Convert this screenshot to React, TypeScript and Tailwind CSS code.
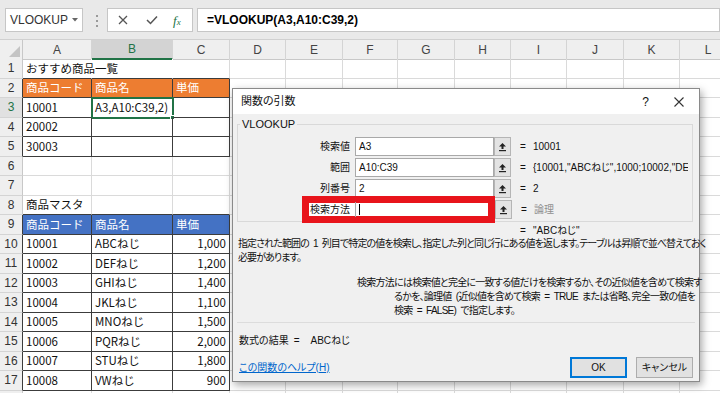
import clsx from 'clsx';

const COLS = 'grid grid-cols-[23px_69px_81px_57px_56px_57px_55px_57px_56px_56px_57px_56px_57px]';
const LETTERS = ['A', 'B', 'C', 'D', 'E', 'F', 'G', 'H', 'I', 'J', 'K', 'L'];
const JP = "font-['Noto_Sans_CJK_JP','Noto_Sans',sans-serif]";
const SP = '\u2002';

const data: Record<number, string[]> = {
  1: ['おすすめ商品一覧'],
  2: ['商品コード', '商品名', '単価'],
  3: ['10001', 'A3,A10:C39,2)', ''],
  4: ['20002'],
  5: ['30003'],
  8: ['商品マスタ'],
  9: ['商品コード', '商品名', '単価'],
  10: ['10001', 'ABCねじ', '1,000'],
  11: ['10002', 'DEFねじ', '1,200'],
  12: ['10003', 'GHIねじ', '1,400'],
  13: ['10004', 'JKLねじ', '1,100'],
  14: ['10005', 'MNOねじ', '1,500'],
  15: ['10006', 'PQRねじ', '2,000'],
  16: ['10007', 'STUねじ', '1,800'],
  17: ['10008', 'VWねじ', '900'],
};

function inTable(r: number, c: number) {
  return c >= 0 && c <= 2 && ((r >= 2 && r <= 5) || (r >= 9 && r <= 17));
}

function PickIcon() {
  return (
    <svg width="9" height="10" viewBox="0 0 9 10">
      <path d="M4.5 1 L8 4.5 H5.5 V7 H3.5 V4.5 H1 Z" fill="#222" />
      <rect x="1" y="8" width="7" height="1.2" fill="#222" />
    </svg>
  );
}

function PickButton() {
  return (
    <div className="w-[17px] h-[19px] bg-[#e3e3e3] border border-[#b5b5b5] flex items-center justify-center">
      <PickIcon />
    </div>
  );
}

function ArgRow({ label, input, children }: { label: string; input: string; children: React.ReactNode }) {
  return (
    <div className="flex items-center h-[19px]">
      <div className="w-[113px] text-right pr-[1px]">{label}</div>
      <div className="ml-[4px] w-[139px] h-[19px] bg-white border border-[#a9a9a9] flex items-center pl-[3px]">{input}</div>
      <PickButton />
      <span className="ml-[9px] w-[13px]">=</span>
      {children}
    </div>
  );
}

export default function App() {
  const rowNums = Array.from({ length: 18 }, (_, i) => i + 1);

  return (
    <div className={clsx('relative w-[720px] h-[393px] overflow-hidden bg-white', JP)}>
      {/* formula bar */}
      <div className="h-[40px] bg-[#e9e9e9] flex items-start pt-[8px] pl-[5px] border-b border-[#d0d0d0]">
        <div className="w-[78px] h-[24px] bg-white border border-[#c6c6c6] flex items-center pl-[4px] font-['Liberation_Sans',sans-serif] text-[12px] text-[#333]">
          VLOOKUP
          <svg className="ml-auto mr-[4px]" width="6" height="4" viewBox="0 0 6 4">
            <path d="M0 0 H6 L3 3.5 Z" fill="#666" />
          </svg>
        </div>
        <div className="ml-[13px] mt-[7px] flex flex-col gap-[3px]">
          <span className="w-[2px] h-[2px] bg-[#9a9a9a]" />
          <span className="w-[2px] h-[2px] bg-[#9a9a9a]" />
          <span className="w-[2px] h-[2px] bg-[#9a9a9a]" />
        </div>
        <div className="ml-[9px] w-[86px] h-[24px] bg-white border border-[#c6c6c6] flex items-center">
          <svg className="ml-[10px]" width="10" height="10" viewBox="0 0 10 10">
            <path d="M1 1 L9 9 M9 1 L1 9" stroke="#555" strokeWidth="1.3" />
          </svg>
          <svg className="ml-[18px]" width="12" height="10" viewBox="0 0 12 10">
            <path d="M1 5 L4.5 8.5 L11 1.5" stroke="#555" strokeWidth="1.5" fill="none" />
          </svg>
          <span className="ml-[15px] italic font-['Liberation_Serif',serif] text-[13px] text-[#217346] leading-none">
            f<span className="text-[9px]">x</span>
          </span>
        </div>
        <div className="ml-[4px] flex-1 h-[24px] bg-white border border-[#c6c6c6] flex items-center pl-[9px] font-['Liberation_Sans',sans-serif] font-bold text-[12px] text-black">
          =VLOOKUP(A3,A10:C39,2)
        </div>
      </div>

      {/* column headers */}
      <div className={clsx(COLS, 'h-[19px]')}>
        <div className="bg-[#efefef] border-r border-b border-[#c8c8c8] flex items-end justify-end p-[2px]">
          <svg width="11" height="11" viewBox="0 0 11 11">
            <path d="M11 0 V11 H0 Z" fill="#c4c4c4" />
          </svg>
        </div>
        {LETTERS.map((l) => (
          <div
            key={l}
            className={clsx(
              "flex items-center justify-center font-['Liberation_Sans',sans-serif] text-[12px] border-r border-[#d4d4d4]",
              l === 'B'
                ? 'bg-[#d3d3d3] text-[#217346] border-b-2 border-b-[#217346]'
                : 'bg-[#efefef] text-[#444] border-b border-b-[#c8c8c8]'
            )}
          >
            {l}
          </div>
        ))}
      </div>

      {/* cells */}
      {rowNums.map((r) => (
        <div key={r} className={clsx(COLS, 'h-[19.5px]')}>
          <div
            className={clsx(
              "flex items-center justify-center font-['Liberation_Sans',sans-serif] text-[12px] border-r border-b border-b-[#d4d4d4]",
              r === 3 ? 'bg-[#e1e1e1] text-[#217346]' : 'bg-[#efefef] text-[#333]',
              inTable(r, 0) ? 'border-r-[#3c3c3c]' : 'border-r-[#c8c8c8]'
            )}
          >
            {r < 18 ? r : ''}
          </div>
          {LETTERS.map((l, c) => {
            const text = data[r]?.[c] ?? '';
            const overflowRow = r === 1 && c < 2;
            return (
              <div
                key={l}
                className={clsx(
                  'relative flex items-center whitespace-nowrap px-[3px] text-[11.5px] text-[#111] border-r border-b',
                  overflowRow
                    ? 'border-r-white'
                    : inTable(r, c) || inTable(r, c + 1)
                      ? 'border-r-[#3c3c3c]'
                      : 'border-r-[#dadada]',
                  inTable(r, c) || inTable(r + 1, c) ? 'border-b-[#3c3c3c]' : 'border-b-[#dadada]',
                  r === 2 && c <= 2 && 'bg-[#ed7d31] text-white',
                  r === 9 && c <= 2 && 'bg-[#4472c4] text-white',
                  c === 2 && r >= 10 && 'justify-end',
                  r === 3 && c === 1 && 'outline-2 outline-[#217346] -outline-offset-1'
                )}
              >
                {text}
                {r === 3 && c === 1 && (
                  <span className="absolute -right-[3px] -bottom-[3px] w-[5px] h-[5px] bg-[#217346] border border-white" />
                )}
              </div>
            );
          })}
        </div>
      ))}

      {/* dialog */}
      <div className="absolute left-[232px] top-[88px] w-[468px] h-[294px] bg-[#f0f0f0] border border-[#8a8a8a] shadow-[2px_3px_8px_rgba(0,0,0,0.35)] flex flex-col text-[10px] text-[#111] font-['Liberation_Sans','Noto_Sans_CJK_JP',sans-serif] [font-feature-settings:'palt']">
        <div className="h-[25px] bg-white flex items-center pl-[8px] text-[11px]">
          <span>関数の引数</span>
          <span className="ml-auto text-[12px]">?</span>
          <svg className="ml-[25px] mr-[15px]" width="10" height="10" viewBox="0 0 10 10">
            <path d="M0.5 0.5 L9.5 9.5 M9.5 0.5 L0.5 9.5" stroke="#333" strokeWidth="1.1" />
          </svg>
        </div>

        <fieldset className="ml-[4px] mt-[4px] w-[456px] h-[104px] border border-[#d9d9d9] px-0 pt-[7px] flex flex-col">
          <legend className="ml-[2px] px-[2px] text-[11px] leading-[12px]">VLOOKUP</legend>
          <div className="flex flex-col gap-[2px]">
            <ArgRow label="検索値" input="A3">
              <span>10001</span>
            </ArgRow>
            <ArgRow label="範囲" input="A10:C39">
              <span className="w-[155px] overflow-hidden whitespace-nowrap">{'{10001,"ABCねじ",1000;10002,"DEFねじ",1200'}</span>
            </ArgRow>
            <ArgRow label="列番号" input="2">
              <span>2</span>
            </ArgRow>
            <div className="flex items-center h-[27px] -mt-[4px]">
              <div className="w-[64px]" />
              <div className="w-[193px] h-[27px] border-[7px] border-[#e8141b] bg-white flex items-center">
                <span className="pl-[1px] w-[46px]">検索方法</span>
                <div className="flex-1 h-[15px] border-l border-[#a9a9a9] flex items-center pl-[3px]">
                  <span className="w-px h-[11px] bg-black" />
                </div>
              </div>
              <PickButton />
              <span className="ml-[9px] w-[13px]">=</span>
              <span className="text-[#8f8f8f]">論理</span>
            </div>
          </div>
        </fieldset>

        <div className="mt-[3px] h-[12px] leading-[12px] flex items-center pl-[287px]">
          <span className="w-[13px]">=</span>
          <span>"ABCねじ"</span>
        </div>
        <div className="pl-[5px] leading-[14px] whitespace-nowrap tracking-[-0.9px]">
          <div>{`指定された範囲の${SP}1${SP}列目で特定の値を検索し、指定した列と同じ行にある値を返します。テーブルは昇順で並べ替えておく`}</div>
          <div>必要があります。</div>
        </div>

        <div className="mt-[11px] flex leading-[14px] whitespace-nowrap tracking-[-0.75px]">
          <div className="pl-[124px] w-[168px]">検索方法</div>
          <div>
            <div>には検索値と完全に一致する値だけを検索するか、その近似値を含めて検索す</div>
            <div>{`るかを、論理値${SP}(近似値を含めて検索${SP}=${SP}TRUE${SP}または省略、完全一致の値を`}</div>
            <div>{`検索${SP}=${SP}FALSE)${SP}で指定します。`}</div>
          </div>
        </div>

        <div className="mt-[4px] mx-[4px] border-t border-[#dcdcdc]" />

        <div className="mt-[10px] h-[14px] flex items-center pl-[6px]">
          <span>数式の結果</span>
          <span className="ml-[5px]">=</span>
          <span className="ml-[11px]">ABCねじ</span>
        </div>

        <div className="mt-[9px] h-[22px] flex items-center pl-[6px] pr-[6px]">
          <span className="text-[#0066cc] underline">この関数のヘルプ(H)</span>
          <button className="ml-auto w-[57px] h-[21px] bg-[#e1e1e1] border border-[#0078d7] shadow-[inset_0_0_0_1px_#0078d7] flex items-center justify-center text-[10px]">
            OK
          </button>
          <button className="ml-[9px] w-[57px] h-[21px] bg-[#e1e1e1] border border-[#adadad] flex items-center justify-center text-[10px]">
            キャンセル
          </button>
        </div>
      </div>
    </div>
  );
}
